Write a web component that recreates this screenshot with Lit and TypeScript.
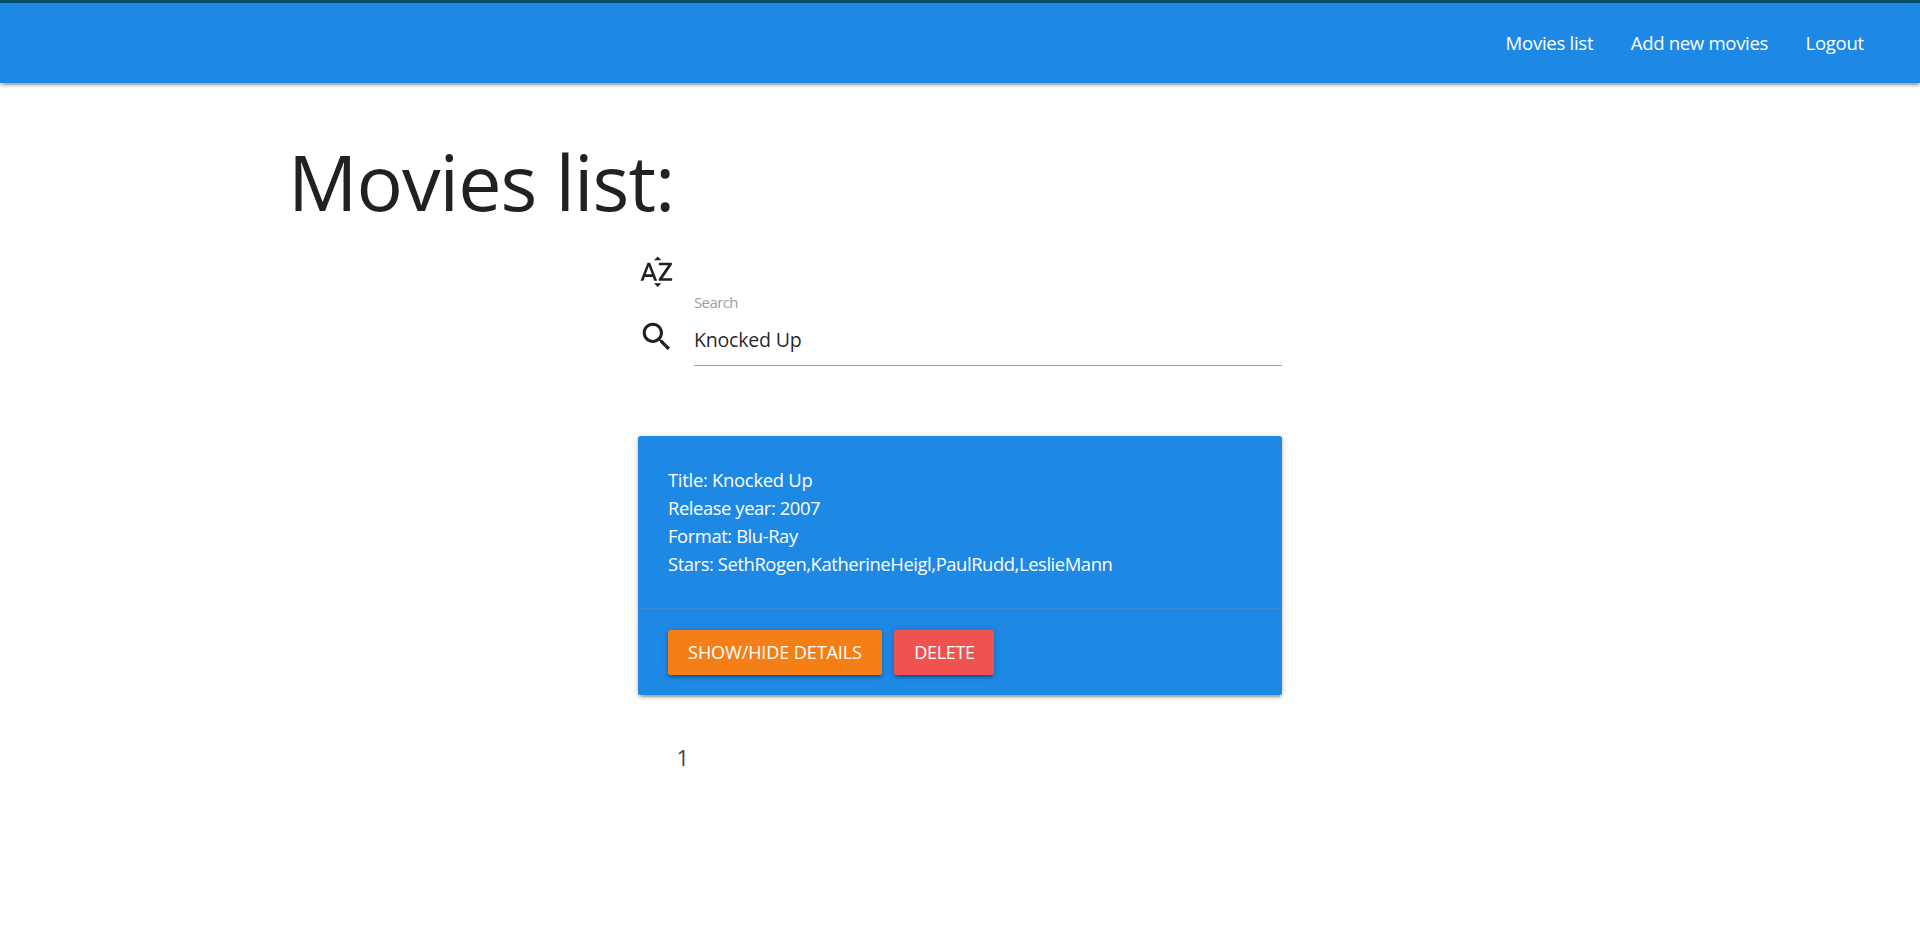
import { LitElement, html, css } from "lit";
import { customElement, property, state } from "lit/decorators.js";

@customElement("nav-bar")
class NavBar extends LitElement {
  static styles = css`
    :host { display: block; border-top: 3px solid #08506b; }
    nav { height: 80px; background: #1e88e5; display: flex; justify-content: flex-end; align-items: center; padding-right: 37.5px; box-sizing: border-box;
      box-shadow: 0 2.5px 2.5px 0 rgba(0,0,0,.14), 0 4px 1px -2.5px rgba(0,0,0,.12), 0 1px 6px 0 rgba(0,0,0,.2); }
    a { color: #fff; font-size: 18.6px; line-height: 80px; padding: 0 18.75px; letter-spacing: -.34px; cursor: pointer; }
    .first { letter-spacing: -.3px; }
  `;
  render() {
    return html`<nav><a class="first">Movies list</a><a>Add new movies</a><a>Logout</a></nav>`;
  }
}

@customElement("movie-card")
class MovieCard extends LitElement {
  @property({ attribute: false }) movie: any;
  static styles = css`
    .card { background: #1e88e5; color: #fff; border-radius: 2.5px;
      box-shadow: 0 2.5px 2.5px 0 rgba(0,0,0,.14), 0 4px 1px -2.5px rgba(0,0,0,.12), 0 1px 6px 0 rgba(0,0,0,.2); }
    .content { padding: 30px; height: 172px; box-sizing: border-box; font-size: 18.4px; line-height: 28.1px; letter-spacing: -.42px; }
    .title { letter-spacing: -.265px; }
    .action { border-top: 1px solid rgba(160,160,160,.2); padding: 21px 30px 20px; display: flex; gap: 12px; }
    button { height: 45px; border: 0; border-radius: 2.5px; padding: 0; color: #fff; font: 18.1px/45px "Open Sans", sans-serif; letter-spacing: -.13px; text-transform: uppercase;
      box-shadow: 0 2.5px 2.5px 0 rgba(0,0,0,.14), 0 4px 1px -2.5px rgba(0,0,0,.12), 0 1px 6px 0 rgba(0,0,0,.2); }
    .details { background: #f57f17; width: 214px; }
    .delete { background: #ef5350; width: 100px; letter-spacing: -.35px; padding-left: 1px; }
  `;
  render() {
    const m = this.movie;
    return html`<div class="card">
      <div class="content">
        <div class="title">Title: ${m.title}</div>
        <div>Release year: ${m.year}</div>
        <div>Format: ${m.format}</div>
        <div>Stars: ${m.stars.join(",")}</div>
      </div>
      <div class="action"><button class="details">Show/hide details</button><button class="delete">Delete</button></div>
    </div>`;
  }
}

@customElement("app-root")
class AppRoot extends LitElement {
  @state() query = "Knocked Up";
  movies = [{ title: "Knocked Up", year: 2007, format: "Blu-Ray", stars: ["SethRogen", "KatherineHeigl", "PaulRudd", "LeslieMann"] }];
  static styles = css`
    :host { display: block; min-height: 935px; background: #fff; color: rgba(0,0,0,.87); font-family: "Open Sans", sans-serif; }
    main { width: 70%; margin: 0 auto; }
    h1 { margin: 0; padding-top: 55px; font-size: 77.2px; line-height: 87px; font-weight: 400; letter-spacing: -.94px; color: #212121; }
    .column { width: 644px; margin-left: 350px; padding-top: 28px; }
    svg { width: 37.5px; height: 37.5px; fill: #212121; display: block; }
    .field { display: flex; height: 75.5px; }
    .field svg { margin-top: 27px; }
    .control { margin-left: 18.5px; flex: 1; display: flex; flex-direction: column; border-bottom: 1px solid #9e9e9e; }
    label { font-size: 14.9px; line-height: 20px; margin-top: 1.5px; letter-spacing: -.55px; color: #9e9e9e; }
    input { border: 0; outline: 0; padding: 0; margin-top: 10.5px; height: 34px; background: none; font: 19.6px "Open Sans", sans-serif; letter-spacing: -.24px; color: rgba(0,0,0,.87); }
    movie-card { display: block; margin-top: 70px; }
    .pages { display: flex; margin-top: 43.5px; padding-left: 38.5px; font-size: 22px; line-height: 37.5px; color: #444; }
  `;
  render() {
    return html`<nav-bar></nav-bar>
      <main>
        <h1>Movies list:</h1>
        <div class="column">
          <svg viewBox="0 0 24 24"><path d="M14.94 4.66h-4.72l2.36-2.36zm-4.69 14.71h4.66l-2.33 2.33zM6.1 6.27L1.6 17.73h1.84l.92-2.45h5.11l.92 2.45h1.84L7.74 6.27H6.1zm-1.13 7.37l1.94-5.18 1.94 5.18H4.97zm10.76 2.5h6.12v1.59h-8.53v-1.29l5.92-8.56h-5.88v-1.6h8.3v1.26l-5.93 8.6z"/></svg>
          <div class="field">
            <svg viewBox="0 0 24 24"><path d="M15.5 14h-.79l-.28-.27C15.41 12.59 16 11.11 16 9.5 16 5.91 13.09 3 9.5 3S3 5.91 3 9.5 5.91 16 9.5 16c1.61 0 3.09-.59 4.23-1.57l.27.28v.79l5 4.99L20.49 19l-4.99-5zm-6 0C7.01 14 5 11.99 5 9.5S7.01 5 9.5 5 14 7.01 14 9.5 11.99 14 9.5 14z"/></svg>
            <div class="control"><label for="search">Search</label><input id="search" .value=${this.query} /></div>
          </div>
          ${this.movies.map((m) => html`<movie-card .movie=${m}></movie-card>`)}
          <div class="pages"><span>1</span></div>
        </div>
      </main>`;
  }
}
